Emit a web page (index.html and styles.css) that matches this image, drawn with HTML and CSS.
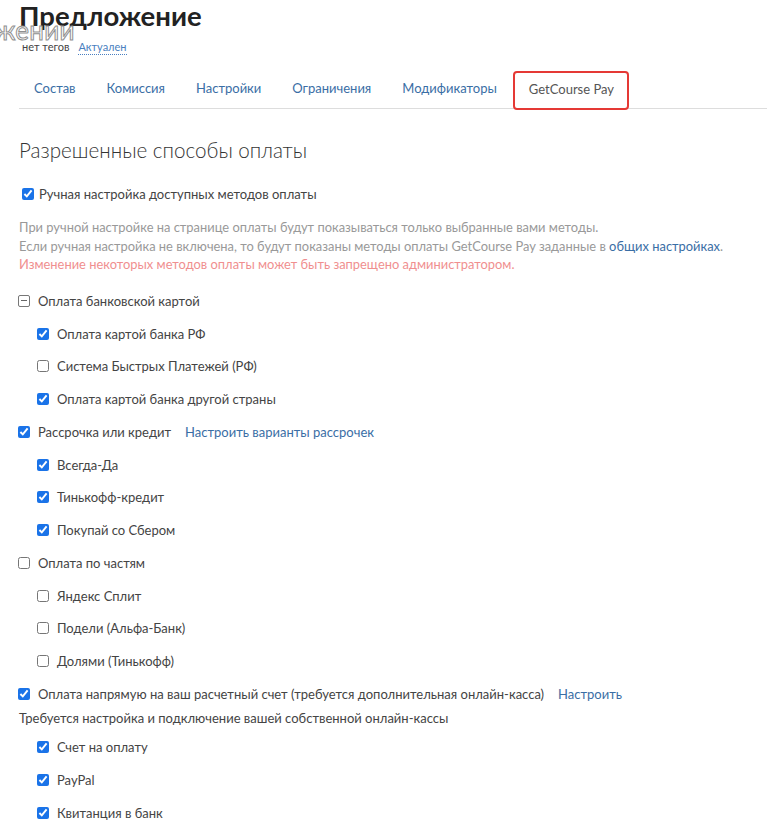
FILE: index.html
```html
<!DOCTYPE html>
<html lang="ru">
<head>
    <meta charset="UTF-8">
    <meta name="viewport" content="width=device-width, initial-scale=1.0">
    <title>Предложение</title>
    <link rel="stylesheet" href="styles.css">
</head>
<body>
    <div class="page">
        <span class="ghost">жении</span>

        <!-- Offer header -->
        <header class="offer-head">
            <h1>Предложение</h1>
            <div class="meta">
                <span>нет тегов</span>
                <a class="status" href="#">Актуален</a>
            </div>
        </header>

        <!-- Tabs -->
        <nav class="tabs">
            <a href="#" class="tab">Состав</a>
            <a href="#" class="tab">Комиссия</a>
            <a href="#" class="tab">Настройки</a>
            <a href="#" class="tab">Ограничения</a>
            <a href="#" class="tab">Модификаторы</a>
            <a href="#" class="tab active">GetCourse Pay</a>
        </nav>

        <!-- Payment methods -->
        <section class="pay">
            <h2>Разрешенные способы оплаты</h2>

            <label class="row manual"><input type="checkbox" checked> Ручная настройка доступных методов оплаты</label>

            <p class="hint">
                При ручной настройке на странице оплаты будут показываться только выбранные вами методы.<br>
                Если ручная настройка не включена, то будут показаны методы оплаты GetCourse Pay заданные в <a href="#">общих настройках</a>.<br>
                <span class="warn">Изменение некоторых методов оплаты может быть запрещено администратором.</span>
            </p>

            <div class="group">
                <label class="row"><span class="box-minus"></span> Оплата банковской картой</label>
                <label class="row sub"><input type="checkbox" checked> Оплата картой банка РФ</label>
                <label class="row sub"><input type="checkbox"> Система Быстрых Платежей (РФ)</label>
                <label class="row sub"><input type="checkbox" checked> Оплата картой банка другой страны</label>
            </div>

            <div class="group">
                <div class="row"><input type="checkbox" checked> Рассрочка или кредит <a href="#" class="link">Настроить варианты рассрочек</a></div>
                <label class="row sub"><input type="checkbox" checked> Всегда-Да</label>
                <label class="row sub"><input type="checkbox" checked> Тинькофф-кредит</label>
                <label class="row sub"><input type="checkbox" checked> Покупай со Сбером</label>
            </div>

            <div class="group">
                <label class="row"><input type="checkbox"> Оплата по частям</label>
                <label class="row sub"><input type="checkbox"> Яндекс Сплит</label>
                <label class="row sub"><input type="checkbox"> Подели (Альфа-Банк)</label>
                <label class="row sub"><input type="checkbox"> Долями (Тинькофф)</label>
            </div>

            <div class="group">
                <div class="row"><input type="checkbox" checked> Оплата напрямую на ваш расчетный счет (требуется дополнительная онлайн-касса) <a href="#" class="link">Настроить</a></div>
                <p class="note">Требуется настройка и подключение вашей собственной онлайн-кассы</p>
                <label class="row sub"><input type="checkbox" checked> Счет на оплату</label>
                <label class="row sub"><input type="checkbox" checked> PayPal</label>
                <label class="row sub"><input type="checkbox" checked> Квитанция в банк</label>
            </div>
        </section>
    </div>
</body>
</html>
```

FILE: styles.css
```css
/* General */
* {
    margin: 0;
    padding: 0;
    box-sizing: border-box;
}

body {
    font-family: Lato, Arial, sans-serif;
    background: #fff;
    color: #333;
    font-size: 13px;
}

a {
    color: #3a6ea5;
    text-decoration: none;
}

.page {
    position: relative;
    padding: 0 0 0 19px;
}

/* faded text left over from the page behind */
.ghost {
    position: absolute;
    left: -5px;
    top: 14px;
    font-size: 26px;
    color: #fff;
    -webkit-text-stroke: 1px #8f8f8f;
    letter-spacing: 0.3px;
}

/* Header */
.offer-head h1 {
    font-size: 27.5px;
    font-weight: 700;
    line-height: 32px;
    color: #222;
}

.meta {
    display: flex;
    gap: 9px;
    margin-top: 8px;
    padding-left: 3px;
    font-size: 11px;
    line-height: 14px;
    color: #444;
}

.status {
    color: #4a7fc0;
    border-bottom: 1px dotted #4a7fc0;
}

/* Tabs */
.tabs {
    display: flex;
    align-items: flex-start;
    margin-top: 14px;
    border-bottom: 1px solid #ddd;
}

.tab {
    padding: 0 16px 0 15px;
    height: 39px;
    line-height: 39px;
    font-size: 13px;
    color: #3a6ea5;
}

.tab.active {
    color: #555;
    border: 2px solid #e53935;
    border-radius: 4px;
    line-height: 33px;
    padding: 0 13px 2px 14px;
    margin: 2px 0 -2px 0;
}

/* Payment methods */
.pay h2 {
    font-size: 20.6px;
    font-weight: 300;
    color: #333;
    margin: 28px 0 19px;
    line-height: 26px;
}

.row {
    display: flex;
    align-items: center;
    height: 32.75px;
    gap: 8px;
    color: #444;
}

.row input {
    margin: 0 0 0 -1px;
    width: 12px;
    height: 12px;
    accent-color: #1a73e8;
}

.row.manual {
    height: 24px;
    gap: 5px;
}

.row.manual input {
    margin-left: 3px;
}

.row .link {
    margin-left: 6px;
}

.sub {
    padding-left: 19px;
}

.box-minus {
    position: relative;
    flex: none;
    width: 12px;
    height: 12px;
    border: 1px solid #777;
    border-radius: 2px;
    margin-left: -1px;
}

.box-minus::after {
    content: "";
    position: absolute;
    left: 2px;
    right: 2px;
    top: 4px;
    height: 1.5px;
    background: #666;
}

.hint {
    margin: 12px 0 11px;
    font-size: 12.9px;
    line-height: 18.5px;
    color: #999;
}

.hint a {
    color: #3a6ea5;
}

.warn {
    color: #f08f8f;
}

.note {
    color: #444;
    line-height: 16px;
    margin: 0 0 4.5px;
}
```
